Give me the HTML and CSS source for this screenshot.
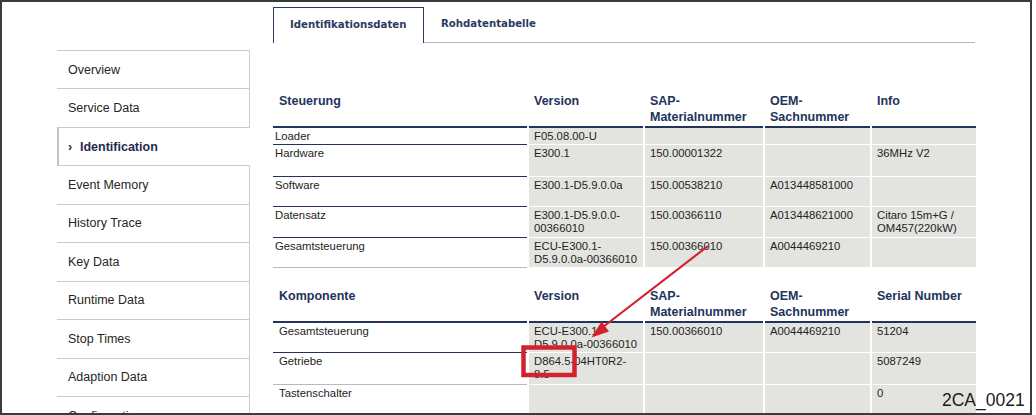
FILE: index.html
```html
<!DOCTYPE html>
<html lang="de">
<head>
<meta charset="utf-8">
<title>Identification</title>
<link rel="stylesheet" href="styles.css">
</head>
<body>
<div class="screen">
  <nav class="sidebar">
    <div class="nav-item">Overview</div>
    <div class="nav-item">Service Data</div>
    <div class="nav-item nav-item-active"><span class="chevron">›</span>Identification</div>
    <div class="nav-item">Event Memory</div>
    <div class="nav-item">History Trace</div>
    <div class="nav-item">Key Data</div>
    <div class="nav-item">Runtime Data</div>
    <div class="nav-item">Stop Times</div>
    <div class="nav-item">Adaption Data</div>
    <div class="nav-item">Configuration</div>
  </nav>

  <main class="main">
    <div class="tabbar">
      <div class="tab tab-active">Identifikationsdaten</div>
      <div class="tab">Rohdatentabelle</div>
      <div class="tab-fill"></div>
    </div>

    <table class="grid grid-ecu">
      <colgroup>
        <col class="c-name"><col class="c-version"><col class="c-sap"><col class="c-oem"><col class="c-info">
      </colgroup>
      <thead>
        <tr class="row-head">
          <th>Steuerung</th><th>Version</th><th>SAP-<br>Materialnummer</th><th>OEM-<br>Sachnummer</th><th>Info</th>
        </tr>
      </thead>
      <tbody>
        <tr class="h17"><td class="name">Loader</td><td>F05.08.00-U</td><td></td><td></td><td></td></tr>
        <tr class="h32"><td class="name">Hardware</td><td>E300.1</td><td>150.00001322</td><td></td><td>36MHz V2</td></tr>
        <tr class="h30"><td class="name">Software</td><td>E300.1-D5.9.0.0a</td><td>150.00538210</td><td>A013448581000</td><td></td></tr>
        <tr class="h31"><td class="name">Datensatz</td><td>E300.1-D5.9.0.0-00366010</td><td>150.00366110</td><td>A013448621000</td><td>Citaro 15m+G / OM457(220kW)</td></tr>
        <tr class="h30 row-soft"><td class="name">Gesamtsteuerung</td><td>ECU-E300.1-D5.9.0.0a-00366010</td><td>150.00366010</td><td>A0044469210</td><td></td></tr>
      </tbody>
    </table>

    <table class="grid grid-parts">
      <colgroup>
        <col class="c-name"><col class="c-version"><col class="c-sap"><col class="c-oem"><col class="c-info">
      </colgroup>
      <thead>
        <tr class="row-head">
          <th>Komponente</th><th>Version</th><th>SAP-<br>Materialnummer</th><th>OEM-<br>Sachnummer</th><th>Serial Number</th>
        </tr>
      </thead>
      <tbody>
        <tr class="h28"><td class="name">Gesamtsteuerung</td><td>ECU-E300.1-D5.9.0.0a-00366010</td><td>150.00366010</td><td>A0044469210</td><td>51204</td></tr>
        <tr class="h32 row-soft"><td class="name">Getriebe</td><td>D864.5-04HT0R2-8.5</td><td></td><td></td><td>5087249</td></tr>
        <tr class="h40"><td class="name">Tastenschalter</td><td></td><td></td><td></td><td>0</td></tr>
      </tbody>
    </table>
  </main>

  <svg class="markup" width="1036" height="415" viewBox="0 0 1036 415">
    <line x1="708" y1="246" x2="601" y2="328.5" stroke="#d3222e" stroke-width="2.2"/>
    <polygon points="591.5,337.5 609,331.5 601.5,321.5" fill="#d3222e"/>
    <rect x="523.5" y="347.5" width="51" height="27.5" fill="none" stroke="#d3222e" stroke-width="4.5"/>
  </svg>
  <div class="figure-id">2CA_0021</div>
</div>
</body>
</html>
```

FILE: styles.css
```css
html, body {
  margin: 0;
  padding: 0;
  background: #ffffff;
}

body {
  width: 1036px;
  height: 415px;
  overflow: hidden;
  font-family: "Liberation Sans", Arial, sans-serif;
  color: #222222;
}

/* outer frame */
.screen {
  position: relative;
  width: 1032px;
  height: 415px;
  box-sizing: border-box;
  border: 2px solid #3b3b3b;
  overflow: hidden;
  display: flex;
  align-items: flex-start;
  background: #ffffff;
}

/* left navigation */
.sidebar {
  flex: none;
  width: 193px;
  margin: 48px 0 0 55px;
  border-top: 1px solid #cbcbcb;
}

.nav-item {
  display: flex;
  align-items: center;
  height: 38.45px;
  box-sizing: border-box;
  padding-left: 11px;
  border-bottom: 1px solid #cbcbcb;
  border-right: 1px solid #cbcbcb;
  font-size: 12.5px;
  color: #262626;
  white-space: nowrap;
}

.nav-item-active {
  padding-left: 9px;
  border-left: 2px solid #c2c2c2;
  border-right-color: transparent;
  font-weight: bold;
  color: #1f2c4f;
}

.chevron {
  display: inline-block;
  width: 12px;
  font-weight: bold;
}

/* content */
.main {
  flex: none;
  width: 702px;
  margin: 5px 0 0 23px;
}

.tabbar {
  display: flex;
  height: 36px;
  font-family: "DejaVu Sans Condensed", "DejaVu Sans", sans-serif;
  font-stretch: condensed;
  font-weight: bold;
  font-size: 11.3px;
  color: #2b3a60;
}

.tab {
  display: flex;
  align-items: center;
  box-sizing: border-box;
  padding: 0 17px;
  border-bottom: 1px solid #b3b7c7;
  padding-bottom: 2px;
}

.tab-active {
  width: 151px;
  padding-left: 16px;
  border: 1px solid #2b3a60;
  border-bottom: none;
  padding-bottom: 3px;
}

.tab-fill {
  flex: 1;
  border-bottom: 1px solid #b3b7c7;
}

/* data tables */
.grid {
  table-layout: fixed;
  border-collapse: separate;
  border-spacing: 2px 0;
  width: 707px;
  margin-left: -2px;
  font-size: 11.3px;
  line-height: 13.3px;
}

.grid-ecu {
  margin-top: 50px;
}

.grid-parts {
  margin-top: 20px;
}

.c-name { width: 254px; }
.c-version { width: 114px; }
.c-sap { width: 118px; }
.c-oem { width: 105px; }
.c-info { width: 104px; }

.row-head { height: 35px; }
.h17 { height: 17px; }
.h28 { height: 28px; }
.h30 { height: 30px; }
.h31 { height: 31px; }
.h32 { height: 32px; }
.h40 { height: 40px; }

.grid th {
  padding: 0 2px 0 5px;
  vertical-align: top;
  text-align: left;
  font-size: 12.5px;
  line-height: 16px;
  font-weight: bold;
  color: #24335a;
  border-bottom: 2px solid #24335a;
}

.grid th:first-child {
  padding-left: 6px;
}

.grid td {
  padding: 2px 2px 0 5px;
  vertical-align: top;
  background: #e3e4e0;
  border-bottom: 1px solid #ffffff;
  color: #232323;
}

.grid td.name {
  padding-left: 2px;
  background: transparent;
  border-bottom: 1px solid #24335a;
}

.grid-parts td.name {
  padding-left: 6px;
}

.row-soft td.name {
  border-bottom-color: #b6b9cb;
}

.grid-parts tr:last-child td.name {
  border-bottom-color: transparent;
}

/* annotations drawn over the page */
.markup {
  position: absolute;
  left: -2px;
  top: -2px;
  pointer-events: none;
}

.figure-id {
  position: absolute;
  left: 940px;
  top: 390px;
  font-size: 17.5px;
  line-height: 17.5px;
  color: #1c1c1c;
  white-space: nowrap;
}
```
